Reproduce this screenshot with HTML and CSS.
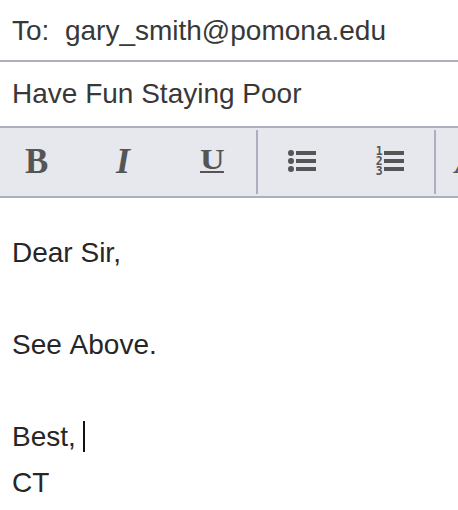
FILE: index.html
```
<!DOCTYPE html>
<html lang="en">
<head>
    <meta charset="UTF-8">
    <meta name="viewport" content="width=device-width, initial-scale=1.0">
    <title>New message</title>
    <link rel="stylesheet" href="styles.css">
</head>
<body>
    <div class="compose">
        <div class="field to">To:&nbsp; gary_smith@pomona.edu</div>
        <div class="field subject">Have Fun Staying Poor</div>

        <div class="toolbar">
            <div class="group styles">
                <span class="tool bold">B</span>
                <span class="tool italic">I</span>
                <span class="tool underline"><span class="letter">U</span></span>
            </div>
            <div class="group lists">
                <svg class="list-icon" width="88" height="40" viewBox="0 0 88 40">
                    <circle cx="33" cy="11" r="3"/>
                    <circle cx="33" cy="19" r="3"/>
                    <circle cx="33" cy="27" r="3"/>
                    <path d="M38 9h20v4H38zM38 17h20v4H38zM38 25h20v4H38z"/>
                </svg>
                <svg class="list-icon" width="88" height="40" viewBox="0 0 88 40">
                    <text x="29.7" y="13">1</text>
                    <text x="29.7" y="23">2</text>
                    <text x="29.7" y="33">3</text>
                    <path d="M38 9h20v4H38zM38 17h20v4H38zM38 25h20v4H38z"/>
                </svg>
            </div>
            <div class="group fonts">
                <span class="tool font-style">A</span>
            </div>
        </div>

        <div class="message">
            <p>Dear Sir,</p>
            <p><br></p>
            <p class="loose">See Above.</p>
            <p><br></p>
            <p>Best, <span class="caret"></span></p>
            <p>CT</p>
        </div>
    </div>
</body>
</html>
```

FILE: styles.css
```
body {
    font-family: "Liberation Sans", Arial, sans-serif;
    font-size: 28px;
    margin: 0;
    background-color: #fff;
    color: #262626;
    overflow: hidden;
}

.compose {
    width: 100%;
    height: 510px;
    overflow: hidden;
}

.field {
    box-sizing: border-box;
    padding-left: 12px;
    color: #383838;
    border-bottom: 2px solid #acafc0;
    white-space: nowrap;
}

.to {
    height: 62px;
    line-height: 62px;
}

.subject {
    height: 66px;
    line-height: 64px;
}

.toolbar {
    display: flex;
    box-sizing: border-box;
    height: 70px;
    padding: 2px 0;
    overflow: hidden;
    background-color: #e7e8ee;
    border-bottom: 2px solid #acafc0;
    color: #555;
}

.group {
    display: flex;
    flex: none;
    box-sizing: border-box;
    height: 64px;
    border-right: 2px solid #acafc0;
}

.styles {
    width: 258px;
    padding-left: 24px;
}

.lists {
    width: 178px;
    padding-top: 12px;
}

.fonts {
    width: 90px;
    padding-left: 19px;
    border-right: none;
}

.tool {
    flex: none;
    width: 88px;
    font-family: "Liberation Serif", "Times New Roman", serif;
    font-size: 36px;
    font-weight: bold;
    line-height: 62px;
}

.bold {
    box-sizing: border-box;
    padding-left: 1px;
    transform: scaleX(0.97);
    transform-origin: left;
}

.italic,
.font-style {
    font-style: italic;
}

.font-style {
    font-weight: normal;
}

.italic {
    padding-left: 4px;
    width: 84px;
}

.underline .letter {
    display: block;
    width: 21px;
    height: 24px;
    margin-top: 17px;
    font-size: 30px;
    line-height: 23px;
    border-bottom: 2px solid #555;
    transform: scaleX(1.14);
    transform-origin: left;
}

.list-icon {
    flex: none;
    fill: #555;
}

.list-icon text {
    font-family: "DejaVu Sans Mono", monospace;
    font-size: 11.5px;
    font-weight: bold;
}

.message {
    padding: 32px 12px 0;
    line-height: 46px;
}

.message p {
    margin: 0;
}

.message .loose {
    word-spacing: 1.5px;
}

.caret {
    display: inline-block;
    width: 2px;
    height: 31px;
    margin-left: -1px;
    background-color: #111;
    vertical-align: -6px;
}
```
